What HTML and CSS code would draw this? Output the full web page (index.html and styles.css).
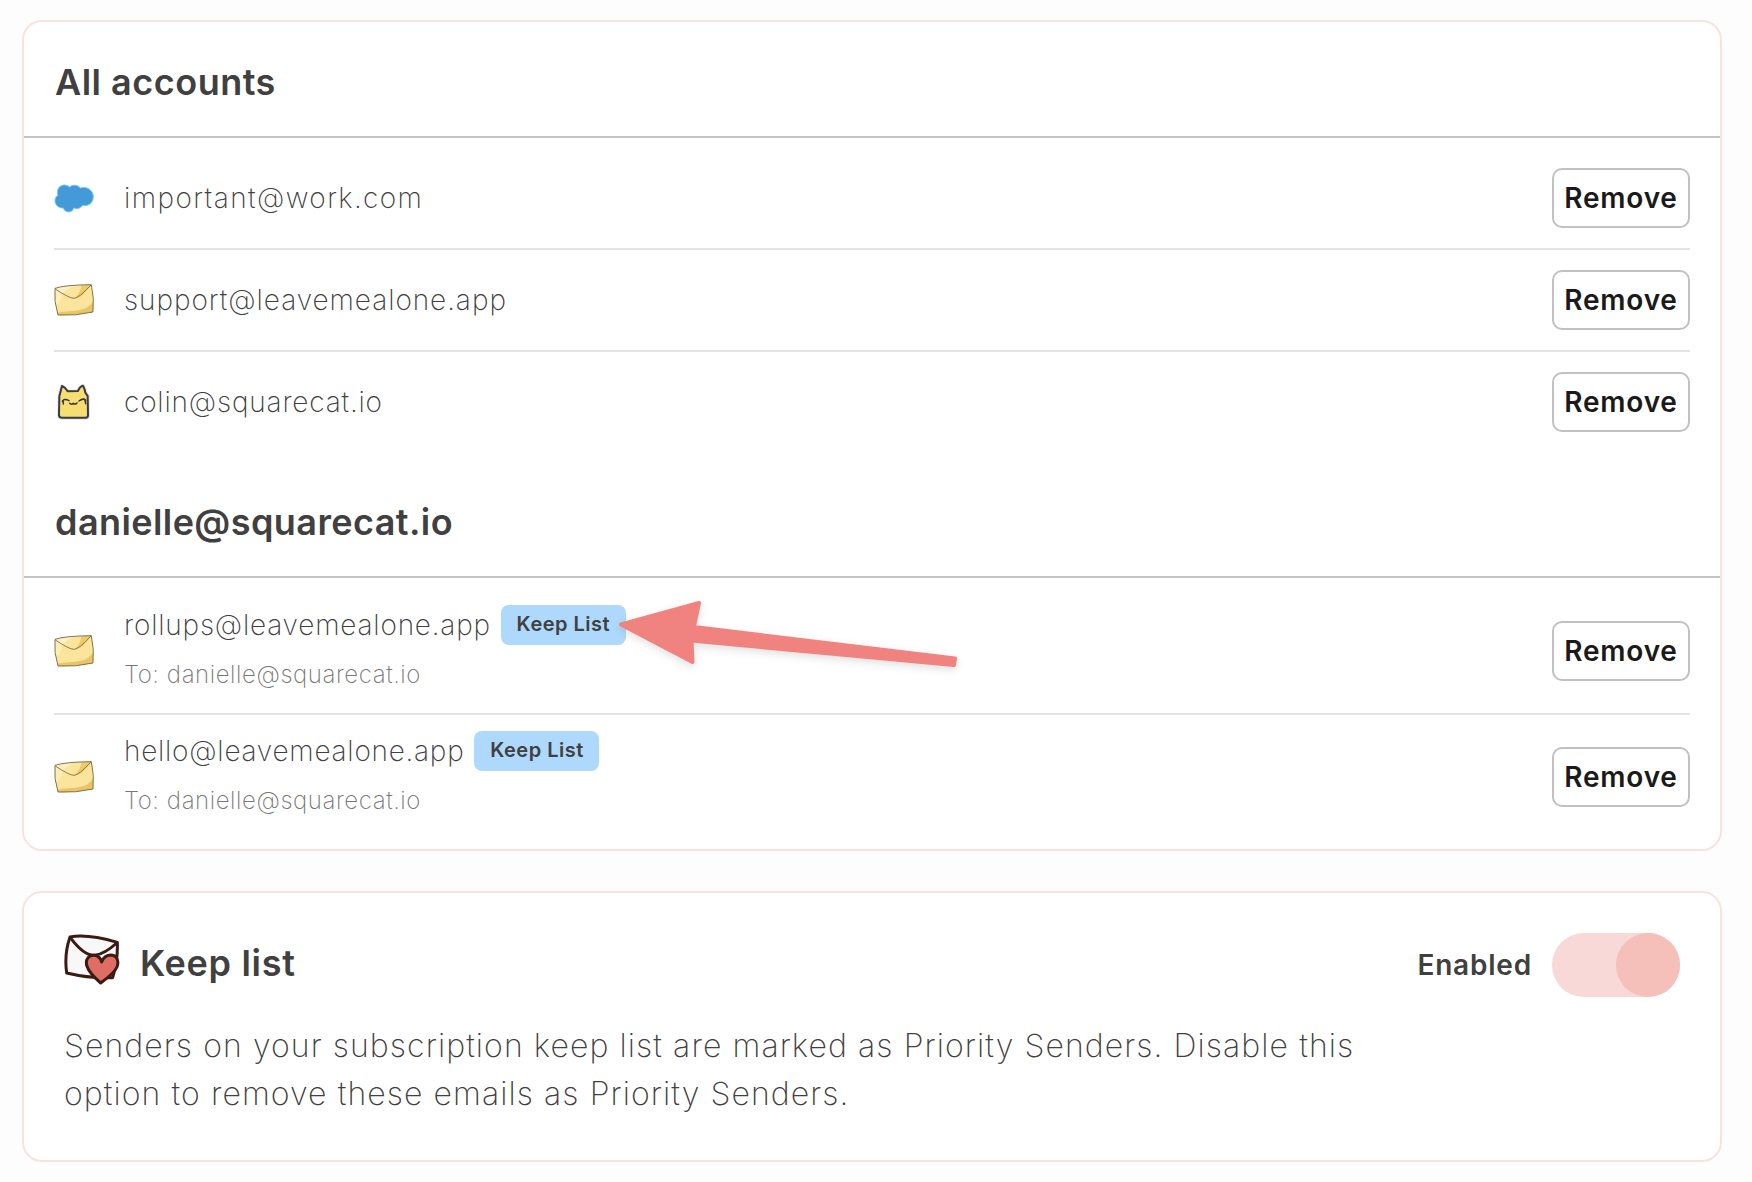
FILE: index.html
```html
<!DOCTYPE html>
<html lang="en">
<head>
<meta charset="utf-8">
<title>Priority Senders</title>
<link rel="stylesheet" href="styles.css">
</head>
<body>
<svg class="defs" width="0" height="0" aria-hidden="true">
  <symbol id="envelope" viewBox="0 0 120 96">
    <path d="M3 13Q30 3 112 2Q121 42 117 84Q66 96 12 93Q-1 52 3 13Z" fill="#fbe49b"/>
    <path d="M3 14Q20 8 60 5Q38 14 24 32Z" fill="#fdf0c8"/>
    <path d="M3 14L24 32Q22 56 4 66Q1 40 3 14Z" fill="#fdedb9"/>
    <path d="M82 4L112 2L86 34Q76 41 62 43Q80 26 82 4Z" fill="#eccb6c"/>
    <path d="M117 52Q104 80 46 82Q26 83 10 86L12 93Q66 96 117 84Z" fill="#e9c566"/>
    <path d="M3 13Q30 3 112 2Q121 42 117 84Q66 96 12 93Q-1 52 3 13Z" fill="none" stroke="#6e6138" stroke-width="2.6" stroke-linejoin="round"/>
    <path d="M4 15Q46 43 60 43Q74 43 111 3" fill="none" stroke="#766234" stroke-width="2.4"/>
  </symbol>
</svg>

<main class="page">
  <section class="card">
    <h2 class="group-title">All accounts</h2>
    <ul class="senders">
      <li class="sender">
        <svg class="icon icon-cloud" viewBox="0 0 120 96"><g fill="#449ad9" stroke="#7ccbf3" stroke-width="3"><path d="M10 27C11 6 34 0 47 12C55 4 72 5 79 15C98 8 118 22 118 41C118 62 99 71 86 67C79 77 68 80 60 75C54 91 32 90 28 75C14 76 3 66 3 53C3 44 7 40 12 37Q10 32 10 27Z"/></g></svg>
        <div class="who"><div class="line"><span class="email email-work">important@work.com</span></div></div>
        <button class="remove">Remove</button>
      </li>
      <li class="sender">
        <svg class="icon"><use href="#envelope"/></svg>
        <div class="who"><div class="line"><span class="email email-support">support@leavemealone.app</span></div></div>
        <button class="remove">Remove</button>
      </li>
      <li class="sender">
        <svg class="icon icon-cat" viewBox="0 0 120 108">
          <path d="M15 37L23 5Q34 9 42 21L71 20Q77 7 87 3Q93 12 95 25L103 35L104 96Q103 103 95 103L24 103Q15 102 14 95Z" fill="#f6df72" stroke="#e2e3f3" stroke-width="9" stroke-linejoin="round"/>
          <path d="M16 37L24 6Q34 10 41 22L72 21Q77 8 87 5Q92 13 94 26L101 36L102 94Q102 101 95 101L24 101Q16 101 15 94Z" fill="#f6df72" stroke="#3c3a3c" stroke-width="6" stroke-linejoin="round"/>
          <path d="M25 52Q30 42 45 50M27 50L28 60M95 49Q88 41 75 51M93 48L95 59M47 58Q52 63 58 58Q64 63 69 57" fill="none" stroke="#36312b" stroke-width="4.5" stroke-linecap="round" stroke-linejoin="round"/>
        </svg>
        <div class="who"><div class="line"><span class="email email-colin">colin@squarecat.io</span></div></div>
        <button class="remove">Remove</button>
      </li>
    </ul>

    <h2 class="group-title group-title-next">danielle@squarecat.io</h2>
    <ul class="senders">
      <li class="sender sender-detailed">
        <svg class="icon"><use href="#envelope"/></svg>
        <div class="who">
          <div class="line"><span class="email email-rollups">rollups@leavemealone.app</span><span class="badge">Keep List</span></div>
          <div class="to">To: danielle@squarecat.io</div>
        </div>
        <button class="remove">Remove</button>
      </li>
      <li class="sender sender-detailed">
        <svg class="icon"><use href="#envelope"/></svg>
        <div class="who">
          <div class="line"><span class="email email-hello">hello@leavemealone.app</span><span class="badge">Keep List</span></div>
          <div class="to">To: danielle@squarecat.io</div>
        </div>
        <button class="remove">Remove</button>
      </li>
    </ul>
  </section>

  <section class="card keep">
    <header class="keep-head">
      <svg class="keep-icon" viewBox="0 0 168 156">
        <path d="M18 9Q70 -1 160 25Q162 80 146 131Q80 134 8 117Q0 60 18 9Z" fill="#f9f8f8" stroke="#3a1c14" stroke-width="9" stroke-linejoin="round"/>
        <path d="M19 11Q60 66 92 64Q122 60 158 27" fill="none" stroke="#3a1c14" stroke-width="9" stroke-linecap="round"/>
        <path d="M110 147Q76 118 69 97C62 74 76 63 91 64Q108 66 113 84Q120 65 139 63C158 63 166 80 159 99Q151 117 110 147Z" fill="#e06d64" stroke="#3a1c14" stroke-width="9" stroke-linejoin="round"/>
      </svg>
      <h2 class="keep-title">Keep list</h2>
      <span class="state">Enabled</span>
      <span class="toggle"><span class="knob"></span></span>
    </header>
    <p class="keep-text">Senders on your subscription keep list are marked as Priority Senders. Disable this option to remove these emails as Priority Senders.</p>
  </section>
</main>

<svg class="arrow" viewBox="0 0 360 90" aria-hidden="true">
  <path d="M11 34.5L89 13L83.8 37L345 68.5L344 75L81.5 50.5L82.5 72Z"/>
</svg>
</body>
</html>
```
FILE: styles.css
```css
* { box-sizing: border-box; }

body {
  margin: 0;
  background: #fdfdfd;
  color: #404040;
  font-family: Inter, "Liberation Sans", sans-serif;
}

.defs { position: absolute; }

.page {
  display: flex;
  flex-direction: column;
  gap: 40px;
  padding: 20px 30px 20px 22px;
}

.card {
  width: 1700px;
  border: 2px solid #fae2e1;
  border-radius: 20px;
  background: #fff;
}

.group-title {
  margin: 0;
  padding: 38px 31px 32px;
  border-bottom: 2px solid #c4c4c4;
  font-size: 36px;
  font-weight: 560;
  line-height: 44px;
  letter-spacing: 0.5px;
}

.group-title-next {
  padding-top: 48px;
  letter-spacing: 0.42px;
}

.senders {
  margin: 0;
  padding: 10px 30px 0;
  list-style: none;
}

.sender {
  display: flex;
  align-items: center;
  padding: 20px 0;
  border-bottom: 2px solid #e3e3e3;
}

.sender:last-child { border-bottom: 0; }

.sender-detailed { padding: 17px 0 16px; }
.sender-detailed:last-child { padding: 16px 0 26px; }

.icon {
  width: 40px;
  height: 32px;
  margin-right: 30px;
}

.icon-cloud { margin-top: 2px; }

.icon-cat { height: 36px; }

.who { flex: 1; }

.line {
  display: flex;
  align-items: center;
  height: 40px;
}

.email {
  font-size: 28px;
  font-weight: 220;
  letter-spacing: 1px;
}

.email-work { letter-spacing: 1.4px; }
.email-support { letter-spacing: 0.95px; }
.email-colin { letter-spacing: 0.82px; }
.email-rollups { letter-spacing: 0.8px; }
.email-hello { letter-spacing: 0.75px; }

.badge {
  width: 125px;
  height: 40px;
  margin-left: 10px;
  border-radius: 8px;
  background: #afd9fc;
  font-size: 20px;
  font-weight: 560;
  line-height: 39px;
  letter-spacing: 0.5px;
  text-align: center;
}

.to {
  margin: 14px 0 6px;
  color: #777;
  font-size: 24px;
  font-weight: 220;
  line-height: 32px;
  letter-spacing: 0.57px;
}

.remove {
  width: 138px;
  height: 60px;
  padding: 0 0 1px;
  border: 2px solid #c1c1c1;
  border-radius: 10px;
  background: #fff;
  color: #1a1a1a;
  font-family: inherit;
  font-size: 28px;
  font-weight: 560;
  letter-spacing: 0.8px;
}

.keep { padding: 40px 40px 43px; }

.keep-head {
  display: flex;
  align-items: center;
  height: 64px;
}

.keep-icon {
  width: 56px;
  height: 52px;
  margin: 0 20px 10px 0;
}

.keep-title {
  flex: 1;
  margin: 0;
  padding-bottom: 4px;
  font-size: 36px;
  font-weight: 560;
  letter-spacing: 0.7px;
}

.state {
  margin-right: 20px;
  padding-bottom: 1px;
  font-size: 28px;
  font-weight: 560;
  letter-spacing: 0.8px;
}

.toggle {
  display: flex;
  justify-content: flex-end;
  width: 128px;
  height: 64px;
  border-radius: 32px;
  background: #f9d9d7;
}

.knob {
  width: 64px;
  height: 64px;
  border-radius: 50%;
  background: #f5bfba;
}

.keep-text {
  width: 1310px;
  margin: 25px 0 -1px;
  font-size: 32px;
  font-weight: 220;
  line-height: 48px;
  letter-spacing: 1.08px;
}

/* Pointer drawn over the page, aimed at the first badge */
.arrow {
  position: absolute;
  left: 610px;
  top: 590px;
  width: 360px;
  height: 90px;
  fill: #f0827f;
  stroke: #f0827f;
  stroke-width: 4px;
  stroke-linejoin: round;
  filter: drop-shadow(0 3px 4px rgba(0, 0, 0, 0.12));
}
```
